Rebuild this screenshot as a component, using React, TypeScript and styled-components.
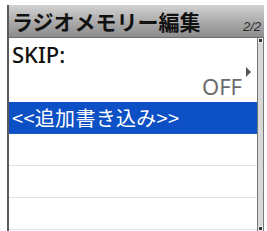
import styled, { createGlobalStyle } from 'styled-components'

const Global = createGlobalStyle`
    html, body {
        margin: 0;
        padding: 0;
        background: #ffffff;
    }
    body {
        font-family: "Noto Sans", "Noto Sans CJK JP", sans-serif;
    }
`

const Screen = styled.div`
    margin: 5px 3px 0 7px;
    width: 257px;
    height: 226px;
    display: flex;
    flex-direction: column;
    border-left: 2px solid #5a5a5a;
    box-sizing: border-box;
    overflow: hidden;
`

const Header = styled.div`
    height: 32px;
    flex: none;
    display: flex;
    align-items: center;
    justify-content: space-between;
    padding: 0 3px 0 3px;
    background: linear-gradient(#d2d2d2, #a6a6a6 60%, #8c8c8c);
    border-bottom: 1px solid #6e6e6e;
`

const Title = styled.h1`
    margin: 0;
    font-family: "Noto Sans CJK JP", sans-serif;
    font-size: 21px;
    font-weight: 700;
    color: #111;
    line-height: 1;
`

const Page = styled.span`
    align-self: flex-end;
    margin-bottom: 3px;
    font-family: "Liberation Sans", sans-serif;
    font-size: 13px;
    font-style: italic;
    color: #2a2a2a;
`

const Body = styled.div`
    flex: 1;
    display: flex;
`

const List = styled.div`
    flex: 1;
    display: flex;
    flex-direction: column;
`

const Row = styled.div<{ $active?: boolean }>`
    height: 32px;
    display: flex;
    align-items: center;
    padding: 0 3px;
    border-bottom: 1px solid ${p => (p.$active ? '#1f56c2' : '#e2e2e2')};
    background: ${p => (p.$active ? '#0d4fc4' : '#ffffff')};
    color: ${p => (p.$active ? '#ffffff' : '#111')};
    font-family: "Noto Sans CJK JP", sans-serif;
    font-size: 20px;
    letter-spacing: 0.3px;
    box-sizing: border-box;
`

const SettingRow = styled.div`
    height: 64px;
    display: grid;
    grid-template-rows: 1fr 1fr;
    padding: 0 3px;
    box-sizing: border-box;
`

const Label = styled.span`
    font-family: "Noto Sans", sans-serif;
    font-size: 22px;
    font-weight: 500;
    color: #111;
    align-self: center;
`

const Value = styled.span`
    justify-self: end;
    align-self: center;
    font-family: "Noto Sans", sans-serif;
    font-size: 22px;
    color: #6c6c6c;
    margin-right: 12px;
    position: relative;
    &::after {
        content: '';
        position: absolute;
        right: -9px;
        top: -4px;
        border-left: 5px solid #555;
        border-top: 5px solid transparent;
        border-bottom: 5px solid transparent;
    }
`

const ScrollBar = styled.div`
    width: 5px;
    flex: none;
    display: flex;
    flex-direction: column;
    justify-content: space-between;
    background: #d8d8d8;
    border-left: 1px solid #777;
    border-right: 1px solid #777;
`

const Knob = styled.div`
    height: 5px;
    background: #333;
    border: 1px solid #eee;
    box-sizing: border-box;
`

export default function App() {
    return (
        <>
            <Global />
            <Screen>
                <Header>
                    <Title>ラジオメモリー編集</Title>
                    <Page>2/2</Page>
                </Header>
                <Body>
                    <List>
                        <SettingRow>
                            <Label>SKIP:</Label>
                            <Value>OFF</Value>
                        </SettingRow>
                        <Row $active>&lt;&lt;追加書き込み&gt;&gt;</Row>
                        <Row />
                        <Row />
                        <Row />
                    </List>
                    <ScrollBar>
                        <Knob />
                        <Knob />
                    </ScrollBar>
                </Body>
            </Screen>
        </>
    )
}
